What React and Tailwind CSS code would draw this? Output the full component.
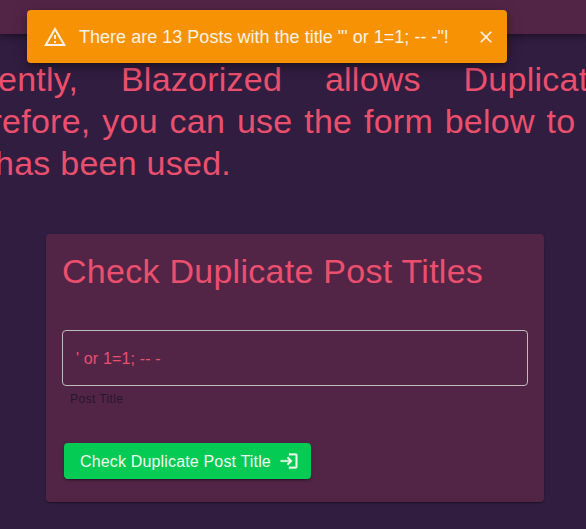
const fill = { fill: 'currentColor' };

function Snackbar() {
  return (
    <div
      role="alert"
      className="absolute left-[27px] top-[10px] flex h-[53px] w-[480px] items-center rounded-[4px] bg-[#f79205] pl-4 pr-[9px] text-[#f9f3e6] shadow-[0_3px_5px_-1px_rgba(0,0,0,0.2),0_6px_10px_0_rgba(0,0,0,0.14),0_1px_18px_0_rgba(0,0,0,0.12)]"
    >
      <svg viewBox="0 0 24 24" className="h-6 w-6 shrink-0" style={fill}>
        <path d="M12 5.99L19.53 19H4.47L12 5.99M12 2L1 21h22L12 2zm1 14h-2v2h2v-2zm0-6h-2v4h2v-4z" />
      </svg>
      <span className="ml-3 grow whitespace-pre text-[18px] leading-6 tracking-[0.02px]">
        {`There are 13 Posts with the title "' or 1=1; -- -"!`}
      </span>
      <button aria-label="Close" className="flex h-6 w-6 shrink-0 items-center justify-center">
        <svg viewBox="0 0 24 24" className="h-5 w-5" style={fill}>
          <path d="M19 6.41L17.59 5 12 10.59 6.41 5 5 6.41 10.59 12 5 17.59 6.41 19 12 13.41 17.59 19 19 17.59 13.41 12z" />
        </svg>
      </button>
    </div>
  );
}

export default function App() {
  return (
    <div className="relative h-[529px] w-[586px] overflow-hidden bg-[#311d3f] font-['Liberation_Sans',Arial,sans-serif] text-[#ea506e]">
      <header className="h-[34px] bg-[#522546] shadow-[0_2px_4px_-1px_rgba(0,0,0,0.2),0_4px_5px_0_rgba(0,0,0,0.14),0_1px_10px_0_rgba(0,0,0,0.12)]" />
      <div className="mt-[24px] whitespace-nowrap text-[34px] leading-[42px] tracking-[0.25px]">
        <p className="-ml-[2px] [word-spacing:33px]">ently, Blazorized allows Duplicat</p>
        <p className="-ml-[9.5px] [word-spacing:2.05px]">refore, you can use the form below to</p>
        <p className="-ml-[5px]">has been used.</p>
      </div>

      <main className="ml-[46px] mt-[50px] h-[268px] w-[498px] rounded-[4px] bg-[#522546] px-4 pt-[16px] shadow-[0_2px_1px_-1px_rgba(0,0,0,0.2),0_1px_1px_0_rgba(0,0,0,0.14),0_1px_3px_0_rgba(0,0,0,0.12)]">
        <h4 className="whitespace-nowrap text-[34px] leading-[42px] tracking-[0.27px]">Check Duplicate Post Titles</h4>
        <div className="mt-[38px] flex h-[56px] items-center rounded-[4px] border border-[#bdbdbd] px-[13px]">
          <input
            aria-label="Post Title"
            defaultValue="' or 1=1; -- -"
            className="w-full bg-transparent text-[16px] leading-[19px] tracking-[0.15px] outline-none"
          />
        </div>
        <p className="ml-2 mt-[3px] text-[12px] leading-[20px] tracking-[0.4px] text-[#27162f]">Post Title</p>
        <button className="ml-[2px] mt-[34px] flex h-9 w-[247px] items-center rounded-[4px] bg-[#03cb54] pl-4 text-[#f0f8ee] shadow-[0_3px_1px_-2px_rgba(0,0,0,0.2),0_2px_2px_0_rgba(0,0,0,0.14),0_1px_5px_0_rgba(0,0,0,0.12)]">
          <span className="whitespace-nowrap pt-[2px] text-[16px] leading-7 tracking-[0.16px]">Check Duplicate Post Title</span>
          <svg viewBox="0 0 24 24" className="ml-2 h-5 w-5" style={fill} stroke="currentColor" strokeWidth="0.4">
            <path d="M11 7L9.6 8.4l2.6 2.6H2v2h10.2l-2.6 2.6L11 17l5-5-5-5zm9 12h-8v2h8c1.1 0 2-.9 2-2V5c0-1.1-.9-2-2-2h-8v2h8v14z" />
          </svg>
        </button>
      </main>
      <Snackbar />
    </div>
  );
}
